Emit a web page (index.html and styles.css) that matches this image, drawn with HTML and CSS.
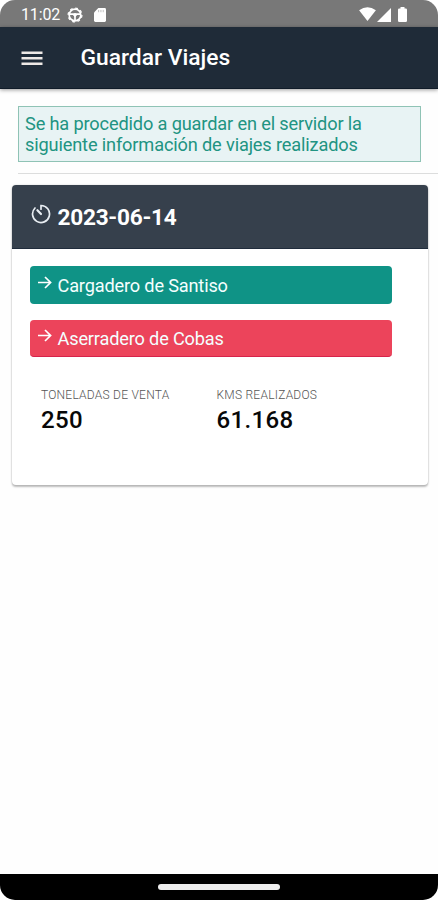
FILE: index.html
```html
<!DOCTYPE html>
<html lang="es">
<head>
<meta charset="utf-8">
<title>Guardar Viajes</title>
<link rel="stylesheet" href="styles.css">
</head>
<body>
<div class="screen">
  <div class="status">
    <span class="clock">11:02</span>
    <svg class="status-wheel" width="16" height="16" viewBox="0 0 16 16" fill="none" stroke="#fff"><circle cx="8" cy="8" r="5.8" stroke-width="1.7"/><circle cx="8" cy="8" r="6.9" stroke-width="1.3" stroke-dasharray="2.71 2.71"/><path d="M3 7.2h10M8 8v5" stroke-width="1.7"/><circle cx="8" cy="8" r="1.3" fill="#fff"/></svg>
    <svg class="status-card" width="12" height="14" viewBox="0 0 13 15"><path fill="#fff" d="M4.7 0H11.5Q13 0 13 1.5V13.5Q13 15 11.5 15H1.5Q0 15 0 13.5V4.7Z"/><path d="M5 2v2.5M7.5 2v2.5M10 2v2.5" stroke="#aaa" stroke-width=".8"/></svg>
    <span class="spacer"></span>
    <svg class="status-wifi" width="17" height="14" viewBox="0 0 18 15"><path fill="#fff" d="M0 3.5Q9-3.2 18 3.5L9 15Z"/></svg>
    <svg class="status-signal" width="14" height="14" viewBox="0 0 14 14"><path fill="#fff" d="M14 0V14H0Z"/></svg>
    <svg class="status-battery" width="9" height="15" viewBox="0 0 9 15"><path fill="#fff" d="M2.5 0H6.5V1.5H7.8Q9 1.5 9 2.8V13.7Q9 15 7.7 15H1.3Q0 15 0 13.7V2.8Q0 1.5 1.2 1.5H2.5Z"/></svg>
  </div>
  <header class="toolbar">
    <svg width="22" height="16" viewBox="0 0 22 16"><path d="M.5 2.8h21M.5 8.3h21M.5 13.8h21" stroke="#eee9e6" stroke-width="2.4"/></svg>
    <h1 class="title">Guardar Viajes</h1>
  </header>
  <main class="content">
    <p class="notice">Se ha procedido a guardar en el servidor la<br>siguiente información de viajes realizados</p>
    <hr class="divider">
    <section class="trip">
      <div class="trip-head">
        <svg class="timer" width="20" height="20" viewBox="0 0 20 20" fill="none" stroke="#e8edf2" stroke-width="1.7" stroke-linecap="round"><path d="M10 5.2V1.5A8.5 8.5 0 1 1 4 4"/><path d="M6.4 6.2L10 10" stroke-width="2.2"/></svg>
        <h2 class="date">2023-06-14</h2>
      </div>
      <div class="trip-body">
        <div class="stop stop-load">
          <svg class="arrow" width="14" height="13" viewBox="0 0 14 13" fill="none" stroke="#fff" stroke-width="1.7"><path d="M0 6.5H12.6M7 1L12.6 6.5L7 12"/></svg>
          <span class="stop-name">Cargadero de Santiso</span>
        </div>
        <div class="stop stop-unload">
          <svg class="arrow" width="14" height="13" viewBox="0 0 14 13" fill="none" stroke="#fff" stroke-width="1.7"><path d="M0 6.5H12.6M7 1L12.6 6.5L7 12"/></svg>
          <span class="stop-name">Aserradero de Cobas</span>
        </div>
        <div class="stats">
          <div><div class="label">TONELADAS DE VENTA</div><div class="value">250</div></div>
          <div><div class="label">KMS REALIZADOS</div><div class="value">61.168</div></div>
        </div>
      </div>
    </section>
  </main>
  <footer class="navbar"><span class="pill"></span></footer>
</div>
</body>
</html>
```
FILE: styles.css
```css
* { box-sizing: border-box; }
body { margin: 0; background: #fff; font-family: Roboto, sans-serif; }
.screen { width: 438px; height: 900px; display: flex; flex-direction: column; border-radius: 15px; overflow: hidden; background: #fefefe; }
.status { height: 27px; flex: none; display: flex; align-items: center; padding: 2px 31px 0 21px; background: #787878; color: #fff; }
.clock { width: 46px; font-size: 16px; line-height: 20px; letter-spacing: -.15px; white-space: nowrap; }
.status-card { margin-left: 11px; }
.spacer { flex: 1; }
.status-wifi { margin-top: -1px; }
.status-signal { margin-left: 1px; }
.status-battery { margin-left: 7px; }
.toolbar { height: 62px; flex: none; display: flex; align-items: center; padding-left: 21px; background: #1f2b38; border-bottom: 1px solid #101c29; box-shadow: 0 1px 4px rgba(0,0,0,.4); }
.title { margin: 1px 0 0 37.5px; color: #fff; font-size: 22.8px; font-weight: 500; line-height: 28px; white-space: nowrap; }
.content { flex: 1; padding: 17px 0 0 12px; }
.notice { width: 403px; height: 56px; margin: 0 0 0 6px; padding: 6px 6px; border: 1px solid #8fc3b5; background: #e8f3f4; color: #219482; font-size: 18.2px; line-height: 21px; letter-spacing: -.15px; white-space: nowrap; }
.divider { height: 1px; margin: 11px 0 11px 6px; border: 0; background: #dcdddd; }
.trip { width: 416px; height: 300px; border-radius: 4px; background: #fff; box-shadow: 0 2px 2px rgba(0,0,0,.25), 0 0 2px rgba(0,0,0,.18); }
.trip-head { height: 64px; display: flex; align-items: center; padding-left: 19px; border-radius: 4px 4px 0 0; background: #36404c; border-bottom: 1px solid #202c3c; color: #fff; }
.timer { margin-top: -5px; }
.date { margin: 3px 0 0 6.5px; font-size: 22.6px; font-weight: 700; line-height: 28px; letter-spacing: -.25px; }
.trip-body { padding: 17px 18px; }
.stop { width: 362px; height: 38px; display: flex; align-items: center; padding-left: 8px; border-radius: 4px; color: #f4ffff; }
.stop-load { background: #0f9386; }
.stop-unload { margin-top: 16px; height: 37px; background: #ec445b; border-bottom: 1px solid #d6234a; }
.arrow { margin-top: -5px; }
.stop-name { margin: 1px 0 0 5.5px; font-size: 18.2px; line-height: 22px; letter-spacing: -.18px; white-space: nowrap; }
.stop-unload .stop-name { margin-top: 2px; }
.stats { display: grid; grid-template-columns: 175.5px 1fr; padding: 31px 0 0 11px; }
.label { color: #555; font-size: 12px; font-weight: 300; line-height: 15px; letter-spacing: .24px; white-space: nowrap; }
.value { margin-top: 3px; color: #080808; font-size: 24px; font-weight: 500; line-height: 28px; letter-spacing: .35px; }
.navbar { height: 26px; flex: none; display: flex; justify-content: center; padding-top: 10px; background: #000; }
.pill { width: 122px; height: 6px; border-radius: 3px; background: #eee; }
```
